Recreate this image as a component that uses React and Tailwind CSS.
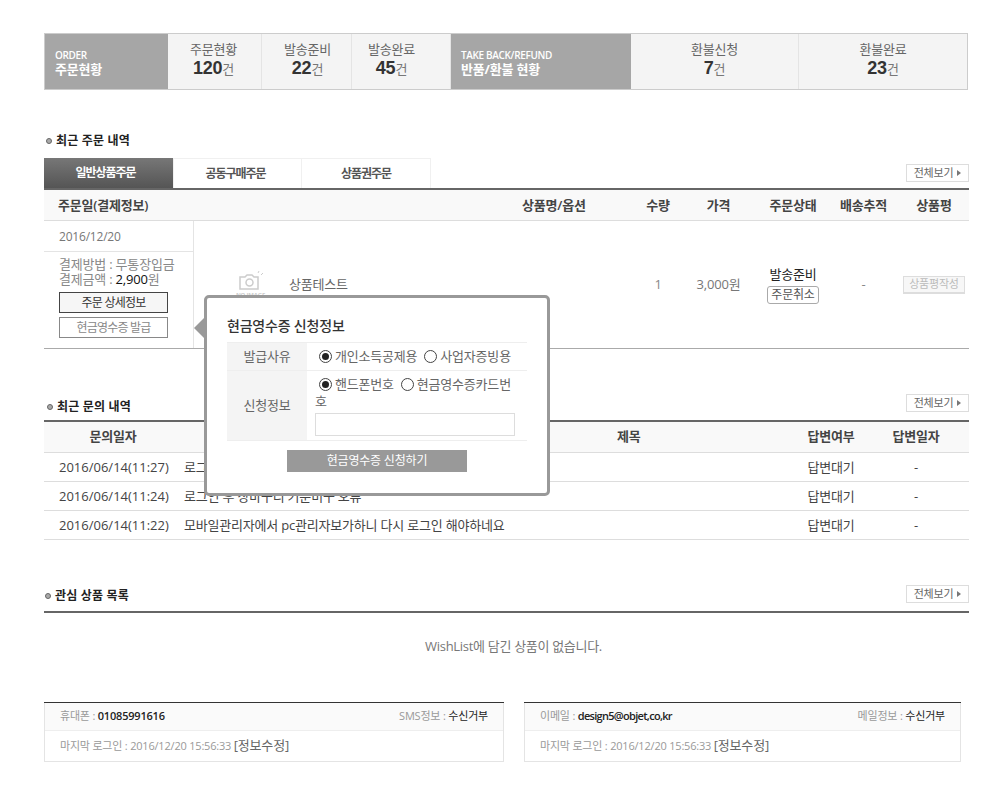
import React from 'react';

const font = "font-['Open_Sans','Noto_Sans_CJK_KR',sans-serif]";

const Stat = ({ w, label, value, pad = '' }) => (
  <div className={`${w} ${pad} h-full flex flex-col items-center justify-center border-r border-[#e4e4e4] last:border-r-0 pb-[2px]`}>
    <div className="text-[13px] leading-[16px] text-[#666]">{label}</div>
    <div className="leading-[22px] text-[#777] text-[13px]">
      <span className="font-['Liberation_Sans',sans-serif] font-bold text-[18px] text-[#333]">{value}</span>건
    </div>
  </div>
);

const StatHead = ({ w, en, ko }) => (
  <div className={`${w} h-full bg-[#a6a6a6] text-white flex flex-col justify-center pl-[10px] pt-[4px]`}>
    <div className="text-[10px] leading-[12px] font-semibold tracking-[-0.35px]">{en}</div>
    <div className="text-[13px] leading-[17px] font-bold">{ko}</div>
  </div>
);

const SeeAll = () => (
  <button className="h-[18px] w-[63px] border border-[#ddd] bg-white flex items-center justify-center gap-[4px] text-[11px] font-normal tracking-[-0.2px] text-[#666]">
    전체보기
    <span className="w-0 h-0 border-y-[3px] border-y-transparent border-l-[4px] border-l-[#777]" />
  </button>
);

const Title = ({ children }) => (
  <div className="flex items-center gap-[4px] text-[12px] font-bold text-[#222] leading-[18px] tracking-[0.2px]">
    <span className="w-[6px] h-[6px] rounded-full border border-[#666] bg-[#aaa]" />
    {children}
  </div>
);

const Radio = ({ on }) => (
  <span className="inline-flex items-center justify-center align-[-2px] w-[13px] h-[13px] rounded-full border border-[#444] bg-white">
    {on && <span className="w-[7px] h-[7px] rounded-full bg-[#222]" />}
  </span>
);

const NoImage = () => (
  <div className="flex flex-col items-center w-[31px]">
    <svg width="28" height="20" viewBox="0 0 28 20" fill="none" stroke="#ccc" strokeWidth="1.5">
      <path d="M3 6h5l2-2h5l2 2h4v12H3z" />
      <circle cx="12.5" cy="11.5" r="3.5" />
      <path d="M24 4l2-2M21 2l1-2" strokeWidth="1" />
    </svg>
    <div className="text-[6px] leading-[8px] font-bold text-[#ccc] whitespace-nowrap">NO IMAGE</div>
  </div>
);

const QnaRow = ({ date, title }) => (
  <div className="h-[29px] pt-[1px] flex items-center border-b border-[#ddd] text-[13px] text-[#444]">
    <div className="w-[140px] pl-[15px] whitespace-nowrap tracking-normal">{date}</div>
    <div className="flex-1 whitespace-nowrap">{title}</div>
    <div className="w-[90px] text-center">답변대기</div>
    <div className="w-[80px] text-center">-</div>
    <div className="w-[13px]" />
  </div>
);

const InfoCard = ({ w, ml, k1, v1, k2, v2, tight = '' }) => (
  <div className={`${w} ${ml} h-[60px] border-x border-b border-[#e4e4e4] border-t-0 text-[11px] text-[#999]`}>
    <div className="h-[1px] bg-[#333] -mx-px" />
    <div className="h-[28px] px-[15px] bg-[#fafafa] border-b border-[#eee] flex items-center justify-between">
      <div>{k1} : <span className={`text-[#222] font-semibold ${tight}`}>{v1}</span></div>
      <div>{k2} : <span className="text-[#222]">{v2}</span></div>
    </div>
    <div className="h-[30px] px-[15px] flex items-center">
      마지막 로그인 : 2016/12/20 15:56:33&nbsp;<span className="text-[#666] text-[13px]">[정보수정]</span>
    </div>
  </div>
);

const App = () => {
  return (
    <div className={`${font} relative w-[1000px] h-[809px] bg-white overflow-hidden pt-[33px] pl-[44px] tracking-[-0.2px]`}>
      <div className="w-[924px] h-[57px] border border-[#ccc] bg-[#f4f4f4] flex box-border">
        <StatHead w="w-[123px]" en="ORDER" ko="주문현황" />
        <Stat w="w-[94px]" label="주문현황" value="120" pad="pr-[2px]" />
        <Stat w="w-[90px]" label="발송준비" value="22" pad="pl-[2px]" />
        <Stat w="w-[99px]" label="발송완료" value="45" pad="pr-[19px]" />
        <StatHead w="w-[180px]" en="TAKE BACK/REFUND" ko="반품/환불 현황" />
        <Stat w="w-[168px]" label="환불신청" value="7" />
        <Stat w="flex-1" label="환불완료" value="23" />
      </div>

      <div className="w-[925px] mt-[42px] pl-[2px]"><Title>최근 주문 내역</Title></div>

      <div className="w-[925px] mt-[8px] h-[30px] flex items-stretch text-[12px] font-semibold tracking-[-1px]">
        <div className="w-[129px] pr-[6px] bg-gradient-to-b from-[#777] to-[#555] text-white flex items-center justify-center">일반상품주문</div>
        <div className="w-[129px] pr-[4px] border border-b-0 border-[#f0f0f0] text-[#555] flex items-center justify-center">공동구매주문</div>
        <div className="w-[129px] border border-b-0 border-l-0 border-[#f0f0f0] text-[#555] flex items-center justify-center">상품권주문</div>
        <div className="flex-1 flex justify-end pt-[6px]"><SeeAll /></div>
      </div>
      <div className="w-[925px] border-t-2 border-[#666] h-[29px] pt-[1px] bg-[#f9f9f9] border-b border-b-[#ddd] flex items-center text-[13px] font-semibold text-[#444] box-content">
        <div className="w-[149px] pl-[14px] whitespace-nowrap">주문일(결제정보)</div>
        <div className="w-[444px] pl-[329px] whitespace-nowrap">상품명/옵션</div>
        <div className="w-[42px] text-center">수량</div>
        <div className="w-[79px] text-center">가격</div>
        <div className="w-[70px] text-center">주문상태</div>
        <div className="w-[71px] text-center">배송추적</div>
        <div className="w-[70px] text-center">상품평</div>
      </div>

      <div className="w-[925px] h-[128px] border-b border-[#aaa] flex">
        <div className="w-[150px] border-r border-[#e4e4e4] bg-white">
          <div className="h-[31px] pl-[15px] pt-[1px] flex items-center border-b border-[#e4e4e4] text-[12px] text-[#777]">2016/12/20</div>
          <div className="pl-[15px] pt-[5px] text-[13px] leading-[15px] text-[#888] whitespace-nowrap">
            <div>결제방법 : 무통장입금</div>
            <div>결제금액 : <span className="text-[#111]">2,900</span>원</div>
            <div className="mt-[5px] w-[109px] h-[21px] border border-[#444] bg-[#f6f6f6] text-[#333] text-[12px] tracking-[-0.8px] flex items-center justify-center">주문 상세정보</div>
            <div className="mt-[4px] w-[109px] h-[21px] border border-[#888] text-[#888] text-[12px] tracking-[-0.8px] flex items-center justify-center">현금영수증 발급</div>
          </div>
        </div>
        <div className="w-[443px] flex items-center pl-[41px] gap-[23px]">
          <NoImage />
          <div className="text-[13px] text-[#666]">상품테스트</div>
        </div>
        <div className="w-[42px] flex items-center justify-center text-[13px] text-[#888]">1</div>
        <div className="w-[79px] flex items-center justify-center text-[13px] text-[#777]">3,000원</div>
        <div className="w-[70px] flex flex-col items-center justify-center">
          <div className="text-[13px] text-[#222] leading-[18px]">발송준비</div>
          <div className="mt-[3px] w-[52px] h-[18px] rounded-[3px] border border-[#aaa] text-[12px] text-[#555] flex items-center justify-center">주문취소</div>
        </div>
        <div className="w-[71px] flex items-center justify-center text-[13px] text-[#888]">-</div>
        <div className="w-[70px] flex items-center justify-center">
          <div className="w-[62px] h-[18px] border border-[#ddd] border-b-2 bg-[#f7f7f7] text-[11px] text-[#bbb] flex items-center justify-center">상품평작성</div>
        </div>
      </div>

      <div className="w-[925px] mt-[45px] flex items-end justify-between pl-[3px]">
        <div className="mb-[-4px]"><Title>최근 문의 내역</Title></div>
        <SeeAll />
      </div>
      <div className="w-[925px] mt-[8px] border-t-2 border-[#666] h-[30px] border-b border-b-[#ddd] bg-[#f9f9f9] flex items-center text-[13px] font-semibold text-[#444] box-content">
        <div className="w-[138px] text-center">문의일자</div>
        <div className="flex-1 pl-[435px]">제목</div>
        <div className="w-[90px] text-center">답변여부</div>
        <div className="w-[80px] text-center">답변일자</div>
        <div className="w-[13px]" />
      </div>
      <div className="w-[925px]">
        <QnaRow date="2016/06/14(11:27)" title="로그인 후 장바구니 기준미구 오류" />
        <QnaRow date="2016/06/14(11:24)" title="로그인 후 장바구니 기준미구 오류" />
        <QnaRow date="2016/06/14(11:22)" title="모바일관리자에서 pc관리자보가하니 다시 로그인 해야하네요" />
      </div>

      <div className="w-[925px] mt-[45px] flex items-end justify-between pl-[1px]">
        <div className="mb-[-2px]"><Title>관심 상품 목록</Title></div>
        <SeeAll />
      </div>
      <div className="w-[925px] mt-[8px] border-t-2 border-[#666] h-[45px] flex items-end justify-center text-[13px] text-[#777]">
        <span className="translate-x-[7px] tracking-[-0.3px]">WishList에 담긴 상품이 없습니다.</span>
      </div>

      <div className="w-[925px] mt-[46px] flex">
        <InfoCard w="w-[460px]" ml="" k1="휴대폰" v1="01085991616" k2="SMS정보" v2="수신거부" />
        <InfoCard w="w-[437px]" ml="ml-[20px]" k1="이메일" v1="design5@objet,co,kr" k2="메일정보" v2="수신거부" tight="tracking-[-0.7px]" />
      </div>

      {/* 현금영수증 팝업 */}
      <div className="absolute left-[204px] top-[295px] w-[346px] h-[201px] rounded-[5px] border-[3px] border-[#999] bg-white">
        <span className="absolute left-[-13px] top-[20px] w-0 h-0 border-y-[10px] border-y-transparent border-r-[10px] border-r-[#999]" />
        <div className="ml-[20px] mt-[18px] text-[14px] leading-[20px] font-medium text-[#333]">현금영수증 신청정보</div>
        <div className="ml-[20px] mt-[6px] w-[300px] border-y border-[#eee] text-[13px] text-[#666]">
          <div className="flex h-[28px] border-b border-[#eee]">
            <div className="w-[80px] bg-[#f4f4f4] flex items-center justify-center">발급사유</div>
            <div className="flex-1 pl-[12px] flex items-center gap-[3px] whitespace-nowrap">
              <Radio on /><span>개인소득공제용</span><span className="ml-[4px]"><Radio /></span><span>사업자증빙용</span>
            </div>
          </div>
          <div className="flex h-[69px]">
            <div className="w-[80px] bg-[#f4f4f4] flex items-center justify-center">신청정보</div>
            <div className="flex-1 pl-[8px] pt-[5px] leading-[17px]">
              <div className="pl-[4px] flex items-center gap-[3px] whitespace-nowrap">
                <Radio on /><span>핸드폰번호</span><span className="ml-[4px]"><Radio /></span><span>현금영수증카드번</span>
              </div>
              <div>호</div>
              <div className="mt-[3px] w-[200px] h-[23px] border border-[#ddd] bg-white" />
            </div>
          </div>
        </div>
        <div className="mt-[9px] ml-[80px] w-[180px] h-[22px] bg-[#999] text-white text-[12px] flex items-center justify-center">현금영수증 신청하기</div>
      </div>
    </div>
  );
};

export default App;
